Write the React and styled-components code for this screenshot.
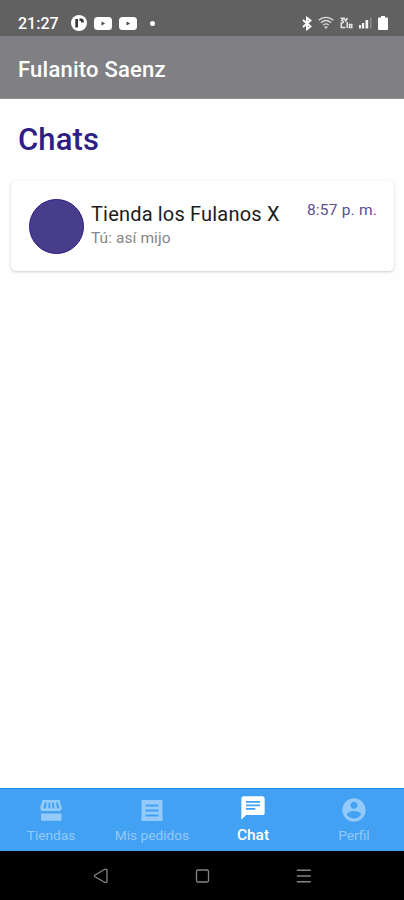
import React from 'react';
import styled, { createGlobalStyle } from 'styled-components';

const GlobalStyle = createGlobalStyle`
    * {
        box-sizing: border-box;
    }
    body {
        margin: 0;
        font-family: Roboto, "Liberation Sans", sans-serif;
        background-color: #fefefe;
    }
    svg {
        display: block;
        flex: none;
    }
`
const Screen = styled.div`
    display: flex;
    flex-direction: column;
    width: 404px;
    height: 900px;
    overflow: hidden;
`
const StatusBar = styled.div`
    display: flex;
    align-items: center;
    justify-content: space-between;
    height: 36px;
    padding: 10px 16px 0 18px;
    background-color: #616162;
    color: #fff;
`
const StatusGroup = styled.div`
    display: flex;
    align-items: center;
    gap: ${props => props.$gap};
`
const Clock = styled.span`
    width: 46px;
    padding-top: 1px;
    font-size: 16px;
    font-weight: 500;
    line-height: 20px;
`
const Dot = styled.span`
    width: 5px;
    height: 5px;
    margin-left: 6px;
    border-radius: 50%;
    background-color: #fff;
`
const Header = styled.header`
    display: flex;
    align-items: center;
    height: 63px;
    padding: 4px 18px 0;
    background-color: #808084;
    border-bottom: 1px solid #8f8f93;
    color: #fff;
    font-size: 22px;
    font-weight: 500;
    letter-spacing: 0.22px;
`
const Content = styled.main`
    flex: 1;
    padding: 21px 10px 0 11px;
`
const PageTitle = styled.h1`
    margin: 0 0 21px 7px;
    color: #2e1f85;
    font-size: 31px;
    font-weight: 500;
    line-height: 40px;
    letter-spacing: 0.1px;
`
const ChatCard = styled.div`
    display: flex;
    height: 90px;
    padding: 18px 17px 0 18px;
    border-radius: 5px;
    background-color: #fff;
    box-shadow: 0 1px 3px rgba(0, 0, 0, 0.2);
`
const Avatar = styled.div`
    flex: none;
    width: 55px;
    height: 55px;
    border: 1px solid #2c1c86;
    border-radius: 50%;
    background-color: #483d8b;
`
const ChatInfo = styled.div`
    flex: 1;
    padding: 2px 0 0 7px;
    white-space: nowrap;
`
const StoreName = styled.div`
    color: #1c1c1c;
    font-size: 20px;
    line-height: 26px;
    letter-spacing: 0.18px;
`
const LastMessage = styled.div`
    color: #858585;
    font-size: 15.5px;
    line-height: 22px;
    letter-spacing: 0.08px;
`
const Time = styled.div`
    color: #5a5096;
    font-size: 15.5px;
    line-height: 23px;
    letter-spacing: 0.2px;
    white-space: nowrap;
`
const TabBar = styled.nav`
    display: grid;
    grid-template-columns: repeat(4, 1fr);
    height: 63px;
    border-top: 1px solid #1590e6;
    background-color: #42a1f3;
`
const Tab = styled.div`
    display: flex;
    flex-direction: column;
    align-items: center;
    padding: ${props => props.$active ? '5px' : '7px'} 0 0 1px;
    color: ${props => props.$active ? '#fff' : '#93caf9'};
`
const TabLabel = styled.span`
    font-size: ${props => props.$active ? '15.5px' : '13.7px'};
    font-weight: ${props => props.$active ? 500 : 400};
    line-height: 20px;
    margin-top: ${props => props.$active ? '3px' : '1px'};
    white-space: nowrap;
`
const SystemBar = styled.div`
    display: grid;
    grid-template-columns: repeat(3, 101px);
    justify-content: center;
    justify-items: center;
    align-items: center;
    height: 49px;
    background-color: #000;
`

const AppBadge = () => (
    <svg width="16" height="16" viewBox="0 0 16 16">
        <circle cx="8" cy="8" r="8" fill="#fff" />
        <path d="M4.300 4h2.700v8.500H4.300zM8.500 3.500h2a2.200 2.200 0 0 1 2.200 2.200V7.500H10V6H8.500z" fill="#39393a" />
    </svg>
)
const VideoBadge = () => (
    <svg width="18" height="13" viewBox="0 0 18 13">
        <rect width="18" height="13" rx="3.500" fill="#fff" />
        <path d="M7.500 4.500l3.700 2-3.700 2z" fill="#4c4c4d" />
    </svg>
)
const BluetoothIcon = () => (
    <svg width="10" height="15" viewBox="0 0 10 15" fill="none" stroke="#fff" strokeWidth="1.900">
        <path d="M1 4l7.500 6.500L5 13.200V1.800l3.500 2.700L1 11" />
    </svg>
)
const WifiIcon = () => (
    <svg width="16" height="14" viewBox="0 0 16 14" fill="none" stroke="#dcdcdc" strokeWidth="1.300">
        <path d="M.7 4.300C5 .4 11 .4 15.300 4.300M3 6.700c3-2.600 7-2.600 10 0M5.300 9c1.600-1.400 3.800-1.400 5.400 0" />
        <path d="M6 10.500h4L8 13z" fill="#dcdcdc" stroke="none" />
    </svg>
)
const NetworkIcon = () => (
    <svg width="13" height="12" viewBox="0 0 13 12" fill="none" stroke="#e4e4e4" strokeWidth="1.500">
        <path d="M.5 1.200h3L1.800 3.500c2.400.2 2.200 3-1.300 2.500M4 1l1.700 3L7.500 1M1.300 6.500v4h4M7.200 5v6M9.500 7.500h2.300v3H9.500z" />
    </svg>
)
const SignalIcon = () => (
    <svg width="13" height="12" viewBox="0 0 13 12" fill="#f2f2f2">
        <path d="M0 8h2.200v3.500H0zM3 6h2.200v5.500H3zM6.500 3h2.700v8.500H6.500z" />
        <path d="M11 .5h1.500v11H11z" fill="#8d8d8e" />
    </svg>
)
const BatteryIcon = () => (
    <svg width="10" height="14" viewBox="0 0 10 14" fill="#fff">
        <path d="M3 0h4v1.500h2a1 1 0 0 1 1 1V13a1 1 0 0 1-1 1H1a1 1 0 0 1-1-1V2.500a1 1 0 0 1 1-1h2z" />
    </svg>
)

const StoreIcon = () => (
    <svg width="28" height="28" viewBox="0 0 28 28" fill="currentColor">
        <path d="M5.500 4h17l2.200 7.500c.3 1.800-.8 3.500-2.600 3.500H5.900c-1.800 0-2.900-1.700-2.600-3.500z" />
        <path d="M7.700 6.500l-1.300 4.800c0 1.600 2.300 1.600 2.600 0l.7-4.800zM11.800 6.500l-.5 4.800c.1 1.500 1.900 1.500 2.100 0V6.500zM15.200 6.500v4.800c.2 1.500 2 1.500 2.100 0l-.5-4.800zM19 6.500l.8 4.800c.3 1.600 2.400 1.600 2.400 0l-1.400-4.800z" fill="#42a1f3" />
        <path d="M4 17.500h20.500v6.200a1 1 0 0 1-1 1H5a1 1 0 0 1-1-1z" />
    </svg>
)
const OrdersIcon = () => (
    <svg width="28" height="28" viewBox="0 0 28 28" fill="currentColor">
        <path d="M3.500 4h21v21h-21z" />
        <path d="M7.500 9.500h13M7.500 14.500h13M7.500 19.500h13" stroke="#42a1f3" strokeWidth="2" />
    </svg>
)
const ChatIcon = () => (
    <svg width="28" height="28" viewBox="0 0 24 24" fill="currentColor">
        <path d="M20 2H4c-1.100 0-1.990.9-1.990 2L2 22l4-4h14c1.100 0 2-.9 2-2V4c0-1.100-.9-2-2-2zM6 9h12v1.500H6V9zm8 4.500H6V12h8v1.500zm4-6H6V6h12v1.500z" />
    </svg>
)
const ProfileIcon = () => (
    <svg width="28" height="28" viewBox="0 0 24 24" fill="currentColor">
        <path d="M12 2C6.480 2 2 6.480 2 12s4.480 10 10 10 10-4.480 10-10S17.520 2 12 2zm0 3c1.660 0 3 1.340 3 3s-1.340 3-3 3-3-1.340-3-3 1.340-3 3-3zm0 14.200c-2.500 0-4.710-1.280-6-3.220.03-1.990 4-3.080 6-3.080 1.990 0 5.970 1.090 6 3.080-1.290 1.940-3.500 3.220-6 3.220z" />
    </svg>
)

const chats = [
    { nome: 'Tienda los Fulanos X', mensaje: 'Tú: así mijo', hora: '8:57 p. m.' }
]

const tabs = [
    { label: 'Tiendas', Icon: StoreIcon },
    { label: 'Mis pedidos', Icon: OrdersIcon },
    { label: 'Chat', Icon: ChatIcon, active: true },
    { label: 'Perfil', Icon: ProfileIcon }
]

export default function App() {
    return (
        <Screen>
            <GlobalStyle />
            <StatusBar>
                <StatusGroup $gap="7px">
                    <Clock>21:27</Clock>
                    <AppBadge />
                    <VideoBadge />
                    <VideoBadge />
                    <Dot />
                </StatusGroup>
                <StatusGroup $gap="6px">
                    <BluetoothIcon />
                    <WifiIcon />
                    <NetworkIcon />
                    <SignalIcon />
                    <BatteryIcon />
                </StatusGroup>
            </StatusBar>
            <Header>Fulanito Saenz</Header>
            <Content>
                <PageTitle>Chats</PageTitle>
                {chats.map(chat => (
                    <ChatCard key={chat.nome}>
                        <Avatar />
                        <ChatInfo>
                            <StoreName>{chat.nome}</StoreName>
                            <LastMessage>{chat.mensaje}</LastMessage>
                        </ChatInfo>
                        <Time>{chat.hora}</Time>
                    </ChatCard>
                ))}
            </Content>
            <TabBar>
                {tabs.map(({ label, Icon, active }) => (
                    <Tab key={label} $active={active}>
                        <Icon />
                        <TabLabel $active={active}>{label}</TabLabel>
                    </Tab>
                ))}
            </TabBar>
            <SystemBar>
                <svg width="16" height="16" viewBox="0 0 16 16" fill="none" stroke="#858585" strokeWidth="1.300">
                    <path d="M11.500 1.500L2 7c-.8.500-.8 1.200 0 1.700l9.500 5.500c.8.400 2.500.3 2.500-.8V2.300c0-1.100-1.700-1.200-2.500-.8z" />
                </svg>
                <svg width="15" height="14" viewBox="0 0 15 14" fill="none" stroke="#858585" strokeWidth="1.300">
                    <rect x="1.500" y="1" width="12" height="12" rx="1.500" />
                </svg>
                <svg width="15" height="14" viewBox="0 0 15 14" stroke="#858585" strokeWidth="1.500">
                    <path d="M.8 1.200h14M.8 7h14M.8 12.800h14" />
                </svg>
            </SystemBar>
        </Screen>
    )
}
